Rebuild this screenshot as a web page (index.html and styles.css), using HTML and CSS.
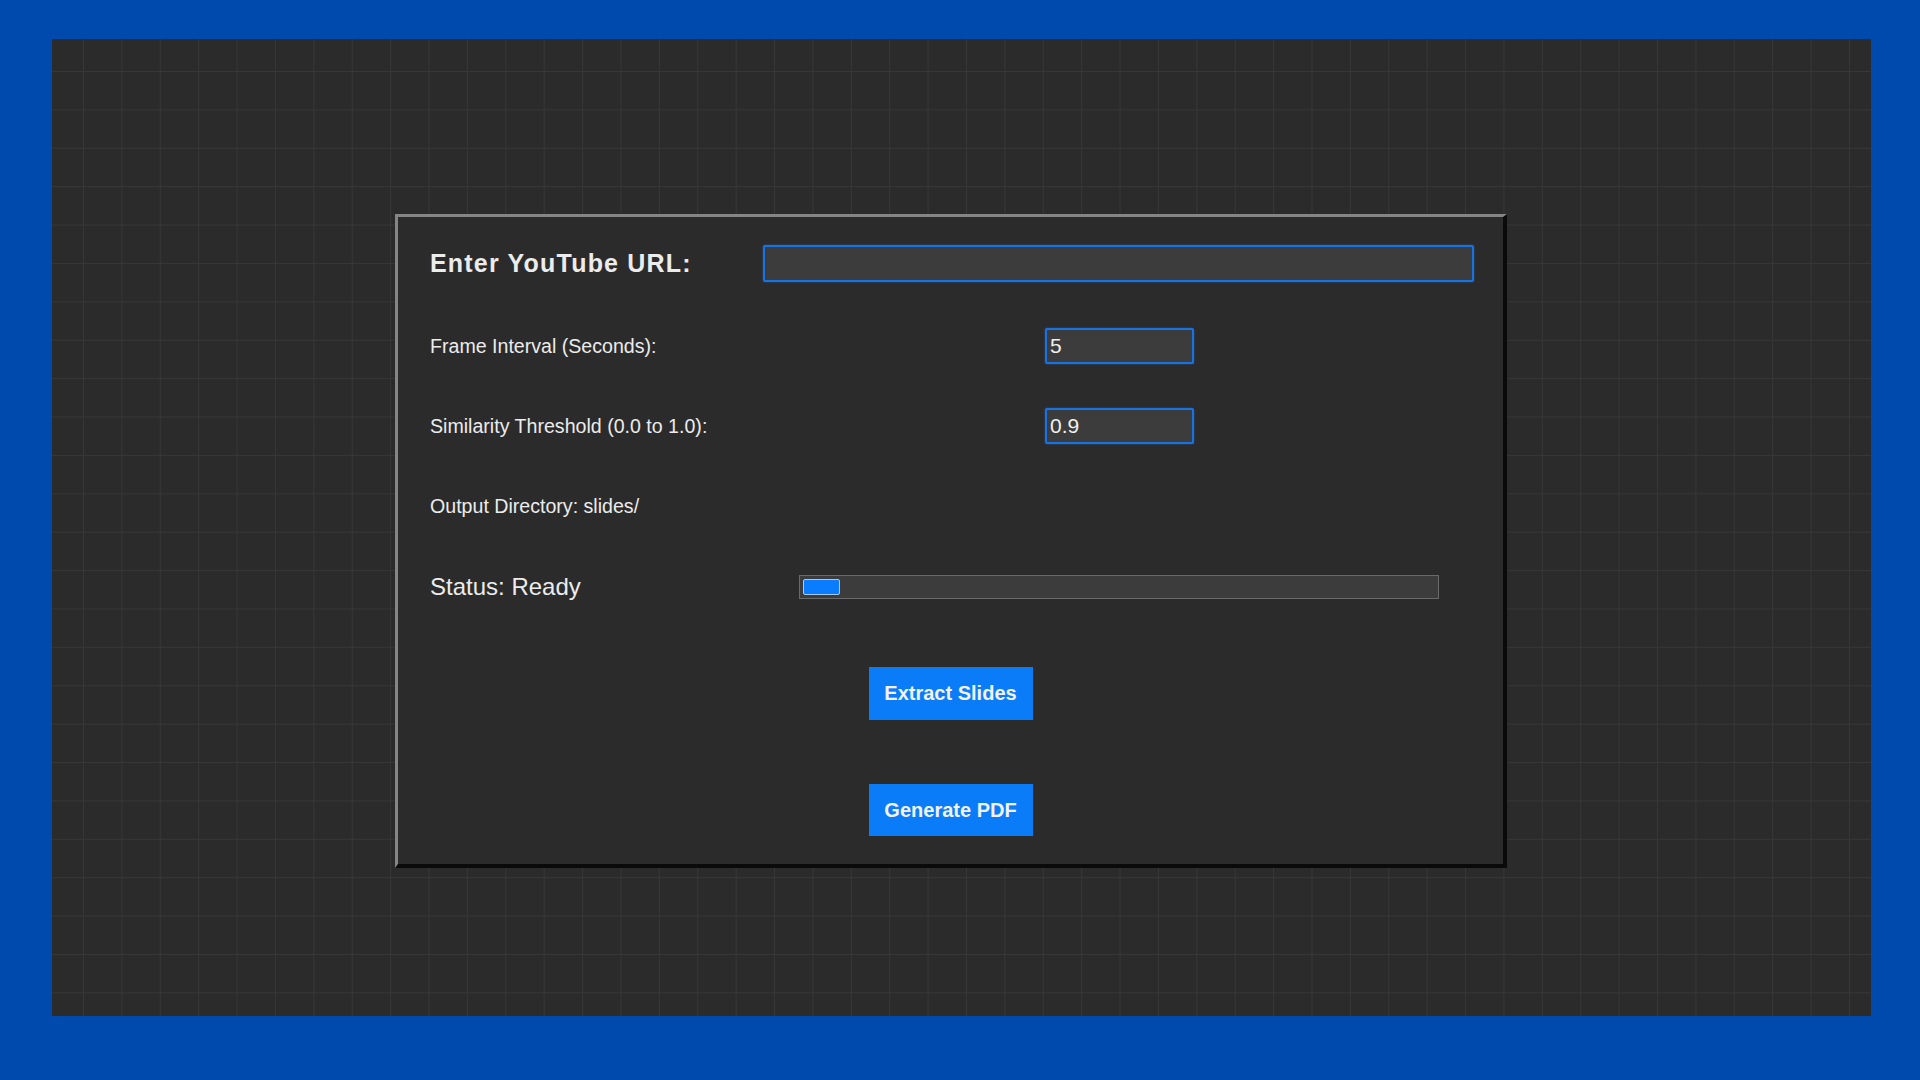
FILE: index.html
```html
<!DOCTYPE html>
<html>
<head>
<meta charset="utf-8">
<link rel="stylesheet" href="styles.css">
</head>
<body>
<main class="canvas">
  <section class="panel">
    <div class="row row-url">
      <label class="title">Enter YouTube URL:</label>
      <div class="field url-field"></div>
    </div>
    <div class="row row-num">
      <label class="label">Frame Interval (Seconds):</label>
      <div class="field num-field">5</div>
    </div>
    <div class="row row-num">
      <label class="label">Similarity Threshold (0.0 to 1.0):</label>
      <div class="field num-field">0.9</div>
    </div>
    <div class="row row-out">
      <span class="label">Output Directory: slides/</span>
    </div>
    <div class="row row-status">
      <span class="status">Status: Ready</span>
      <div class="progress"><div class="progress-fill" style="width: 37px"></div></div>
    </div>
    <div class="actions">
      <button class="btn btn-extract">Extract Slides</button>
      <button class="btn btn-pdf">Generate PDF</button>
    </div>
  </section>
</main>
</body>
</html>
```
FILE: styles.css
```css
html, body {
  margin: 0;
  padding: 0;
}
body {
  width: 1920px;
  height: 1080px;
  background: #004aad;
  overflow: hidden;
  font-family: "Liberation Sans", Arial, sans-serif;
}
.canvas {
  box-sizing: border-box;
  margin: 39px 0 0 52px;
  width: 1819px;
  height: 977px;
  padding: 175px 0 0 343px;
  background-color: #2b2b2b;
  background-image:
    linear-gradient(to right, #373737 1px, transparent 1px),
    linear-gradient(to bottom, #373737 1px, transparent 1px);
  background-size: 38.4px 38.4px;
  background-position: 31px 32px;
}
.panel {
  box-sizing: border-box;
  width: 1112px;
  height: 654px;
  background: #2b2b2b;
  border-style: solid;
  border-width: 3px 4px 4px 3px;
  border-color: #858585 #0a0a0a #0a0a0a #858585;
  padding: 28px 0 0 32px;
  display: flex;
  flex-direction: column;
  color: #ececec;
}
.row {
  display: flex;
  align-items: center;
}
.row-url {
  height: 37px;
}
.title {
  width: 333px;
  font-weight: bold;
  font-size: 25px;
  letter-spacing: 1.2px;
}
.field {
  box-sizing: border-box;
  height: 37px;
  background: #3c3c3c;
  border: 2px solid #1873e0;
  border-radius: 2px;
  box-shadow: 0 0 2px rgba(30, 120, 240, 0.6);
  color: #f0f0f0;
  font-size: 21px;
  display: flex;
  align-items: center;
  padding-left: 3px;
}
.url-field {
  width: 711px;
}
.row-num {
  margin-top: 46px;
  height: 36px;
}
.row-num + .row-num {
  margin-top: 44px;
}
.label {
  font-size: 19.6px;
}
.row-num .label {
  width: 615px;
}
.num-field {
  width: 149px;
  height: 36px;
}
.row-out {
  margin-top: 44px;
  height: 36px;
}
.row-status {
  margin-top: 45px;
  height: 36px;
}
.status {
  width: 369px;
  font-size: 24px;
}
.progress {
  box-sizing: border-box;
  width: 640px;
  height: 24px;
  background: #3c3c3c;
  border: 1px solid #6a6a6a;
  padding: 3px;
}
.progress-fill {
  box-sizing: border-box;
  height: 16px;
  background: #0a7cff;
  border: 1px solid #a9c8ee;
  border-radius: 2px;
}
.actions {
  display: flex;
  flex-direction: column;
  align-items: center;
  margin-left: -32px;
  margin-top: 62px;
  gap: 64px;
}
.btn {
  width: 164px;
  height: 53px;
  border: none;
  background: #0b7cf7;
  color: #f2f2f2;
  font-family: "Liberation Sans", Arial, sans-serif;
  font-weight: bold;
  font-size: 20px;
  padding: 0;
}
.btn-pdf {
  height: 52px;
}
```
